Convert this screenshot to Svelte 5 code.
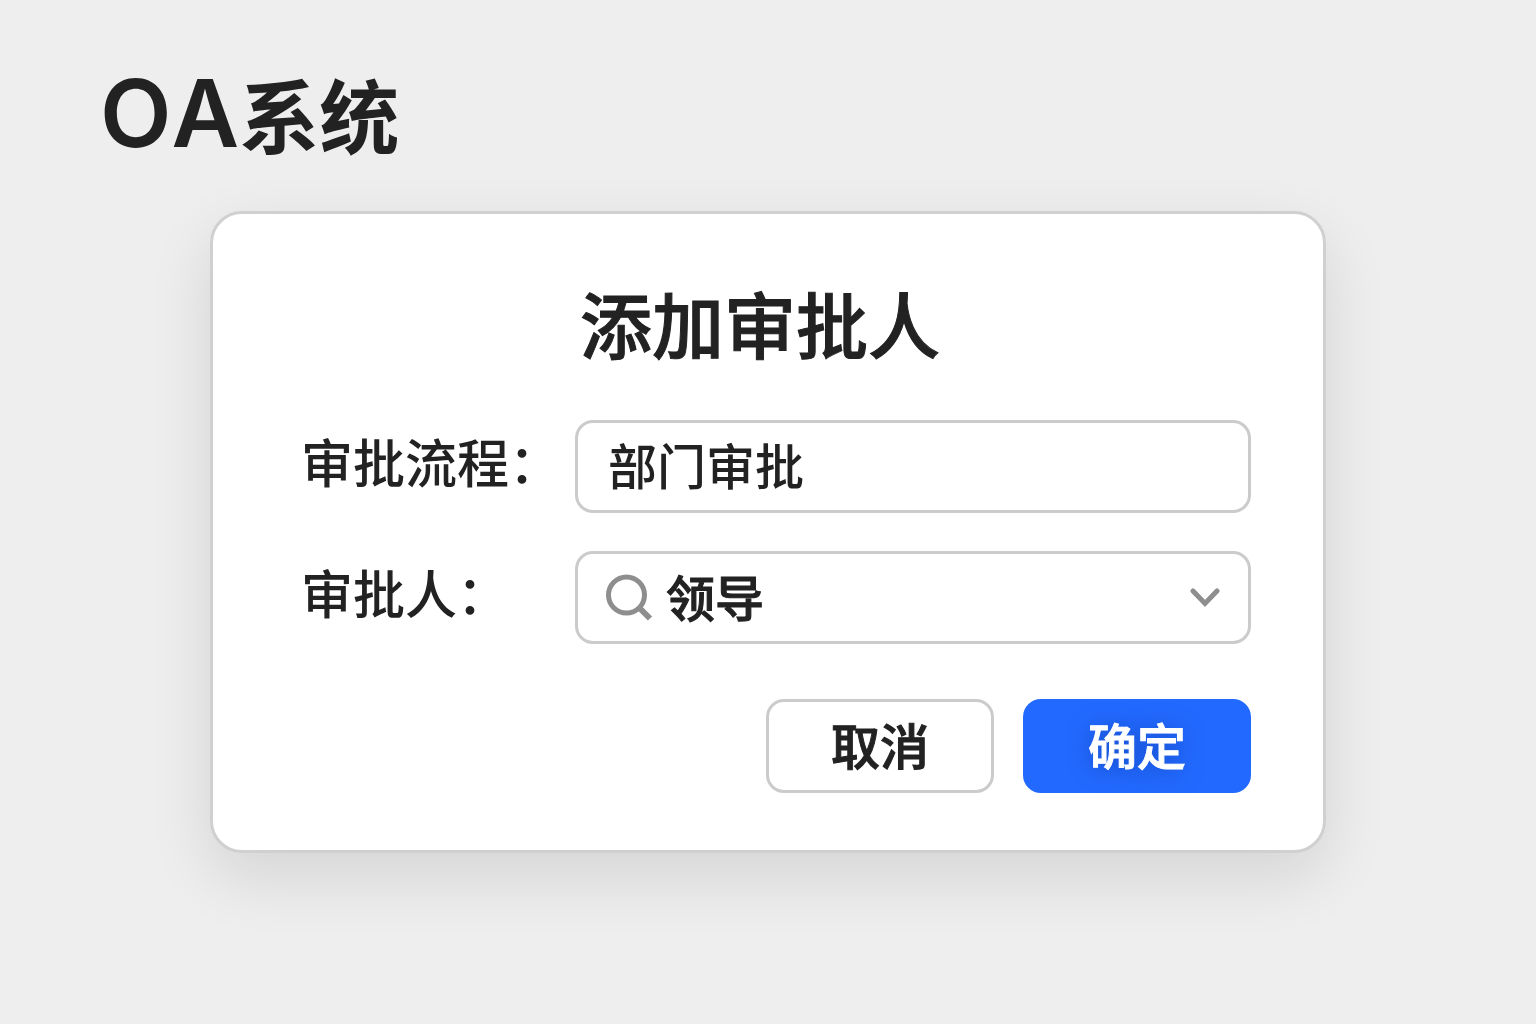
<script lang="ts">

    let flow = $state('部门审批');
    let approver = $state('领导');

    const approvers = ['领导'];

    const onSubmit = (e: SubmitEvent) => {
        e.preventDefault();
    }

</script>

<main class="page">
    <h1><span class="latin">OA</span>系统</h1>

    <section class="dialog" role="dialog" aria-labelledby="dialog-title">
        <h2 id="dialog-title">添加审批人</h2>

        <form onsubmit={onSubmit}>
            <div class="fields">
                <label for="flow">审批流程：</label>
                <div class="control">
                    <input id="flow" type="text" bind:value={flow} />
                </div>

                <label for="approver">审批人：</label>
                <div class="control">
                    <svg class="search" viewBox="0 0 48 48" aria-hidden="true">
                        <circle cx="20.5" cy="21" r="18" />
                        <path d="M33.5 34 L44 44.5" stroke-width="6" />
                    </svg>
                    <select id="approver" bind:value={approver}>
                        {#each approvers as name}
                            <option value={name}>{name}</option>
                        {/each}
                    </select>
                    <svg class="chevron" viewBox="0 0 30 20" aria-hidden="true">
                        <path d="M3 3 L15 15.5 L27 3" />
                    </svg>
                </div>
            </div>

            <div class="actions">
                <button type="button" class="btn">取消</button>
                <button type="submit" class="btn primary">确定</button>
            </div>
        </form>
    </section>
</main>

<style>

    :global(body) {
        margin: 0;
        background: #efeeee;
    }

    .page {
        min-height: 100vh;
        box-sizing: border-box;
        padding: 63px 100px;
        color: #222;
        font-family: "Liberation Sans", "Noto Sans CJK SC", sans-serif;
    }

    h1 {
        margin: 0;
        font-size: 80px;
        line-height: 100px;
        font-weight: 700;
    }

    .latin {
        font-family: Inter, "Liberation Sans", sans-serif;
        font-size: 93px;
        font-weight: 600;
        font-kerning: none;
    }

    .dialog {
        box-sizing: border-box;
        max-width: 1116px;
        margin: 41px auto 0;
        padding: 62px 72px 57px;
        background: #fff;
        border: 3px solid #d0d0d2;
        border-radius: 32px;
        box-shadow: 0 24px 64px rgba(0, 0, 0, 0.11);
    }

    h2 {
        margin: 0 0 40px;
        padding-right: 16px;
        font-size: 72px;
        line-height: 104px;
        font-weight: 500;
        text-align: center;
    }

    form {
        padding-left: 16px;
    }

    .fields {
        display: grid;
        grid-template-columns: 274px minmax(0, 1fr);
        row-gap: 38px;
        align-items: center;
    }

    label {
        padding-bottom: 4px;
        font-size: 52px;
        line-height: 72px;
        font-weight: 500;
        white-space: nowrap;
    }

    .control {
        display: flex;
        align-items: center;
        box-sizing: border-box;
        height: 93px;
        padding: 0 28px;
        border: 3px solid #cbcbcd;
        border-radius: 18px;
        background: #fff;
    }

    .control:focus-within {
        border-color: #226aff;
    }

    input,
    select {
        flex: 1;
        min-width: 0;
        height: 72px;
        margin: 0;
        padding: 0;
        border: 0;
        outline: 0;
        appearance: none;
        background: transparent;
        color: inherit;
        font: inherit;
        font-size: 49px;
        font-weight: 500;
    }

    input {
        padding: 0 2px 6px;
    }

    select {
        padding-top: 4px;
    }

    /* a step heavier than the 500 cut */
    h2,
    select,
    .btn {
        -webkit-text-stroke: 1px;
    }

    svg {
        flex: none;
        fill: none;
        stroke: #8e8e8e;
        stroke-width: 5;
    }

    .search {
        width: 48px;
        height: 48px;
        margin-right: 12px;
    }

    .chevron {
        width: 30px;
        height: 20px;
        stroke-linecap: round;
    }

    .actions {
        display: flex;
        justify-content: flex-end;
        gap: 29px;
        margin-top: 55px;
    }

    .btn {
        box-sizing: border-box;
        width: 228px;
        height: 94px;
        padding: 0 0 6px;
        border: 3px solid #cbcbcd;
        border-radius: 18px;
        background: #fff;
        color: inherit;
        font: inherit;
        font-size: 49px;
        font-weight: 500;
        cursor: pointer;
    }

    .primary {
        border-color: #226aff;
        background: #226aff;
        color: #fff;
        text-shadow: 0 2px 24px rgba(0, 20, 90, 0.4);
    }

</style>
